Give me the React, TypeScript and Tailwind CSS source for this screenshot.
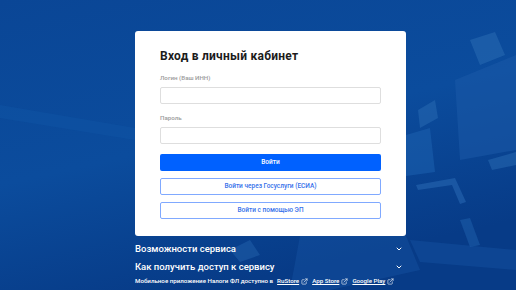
import { ChevronDown, ExternalLink } from "lucide-react";

function Field({ label }: { label: string }) {
  return (
    <div className="flex flex-col">
      <label className="h-[6px] text-[6.2px] font-medium leading-[6px] text-[#9b9b9b]">{label}</label>
      <input className="mt-[6px] h-[17px] rounded-[2px] border border-[#dedede] bg-white outline-none" />
    </div>
  );
}

function Accordion({ title }: { title: string }) {
  return (
    <button className="flex h-[18px] w-full items-center justify-between text-left text-[9.5px] font-medium text-white">
      <span>{title}</span>
      <ChevronDown className="mr-[3px] h-[8px] w-[8px]" strokeWidth={3} />
    </button>
  );
}

function StoreLink({ name }: { name: string }) {
  return (
    <a className="flex items-center gap-[2px] text-white underline">
      {name}
      <ExternalLink className="h-[7px] w-[7px]" strokeWidth={2} />
    </a>
  );
}

function Backdrop() {
  return (
    <svg className="absolute inset-0 h-full w-full" viewBox="0 0 516 290" preserveAspectRatio="none">
      <defs>
        <linearGradient id="bg" x1="0" y1="0" x2="0.4" y2="1">
          <stop offset="0" stopColor="#0a4696" />
          <stop offset="0.55" stopColor="#0b4c9d" />
          <stop offset="1" stopColor="#073b87" />
        </linearGradient>
      </defs>
      <rect width="516" height="290" fill="url(#bg)" />
      <polygon points="0,105 135,128 135,140 0,118" fill="#1158a8" opacity="0.35" />
      <polygon points="470,40 495,32 505,55 480,65" fill="#2a6bb3" opacity="0.55" />
      <polygon points="455,80 516,55 516,150 460,160" fill="#1b5aa8" opacity="0.55" />
      <polygon points="418,110 435,100 438,118 420,128" fill="#2a6bb3" opacity="0.5" />
      <polygon points="406,135 430,128 435,172 406,176" fill="#1a5fae" opacity="0.6" />
      <polygon points="488,160 516,152 516,165 492,170" fill="#2a6bb3" opacity="0.5" />
      <polygon points="416,185 455,178 466,202 460,204 452,185 418,190" fill="#2765b0" opacity="0.6" />
      <polygon points="460,220 470,218 480,245 470,247" fill="#2062ad" opacity="0.5" />
      <polygon points="300,236 406,236 420,270 330,290 290,290" fill="#1a5aa8" opacity="0.35" />
      <polygon points="230,250 250,240 260,255 240,262" fill="#2a6bb3" opacity="0.4" />
      <polygon points="410,240 516,250 516,270 420,262" fill="#1b5aa8" opacity="0.35" />
    </svg>
  );
}

export default function App() {
  return (
    <div className="relative h-[290px] w-[516px] overflow-hidden font-['Roboto',sans-serif]">
      <Backdrop />
      <div className="relative ml-[135px] flex w-[271px] flex-col pt-[31px]">
        <div className="flex flex-col rounded-[3px] bg-white px-[25px] pb-[17px] pt-[18px]">
          <h1 className="text-[12px] font-bold leading-[15px] tracking-[0.25px] text-[#1c1c1c]">Вход в личный кабинет</h1>
          <div className="mt-[11px] flex flex-col gap-[11px]">
            <Field label="Логин (Ваш ИНН)" />
            <Field label="Пароль" />
          </div>
          <div className="mt-[10px] flex flex-col gap-[7px] text-[6.5px] font-medium">
            <button className="h-[17px] rounded-[2px] bg-[#0061ff] text-white">Войти</button>
            <button className="h-[17px] rounded-[2px] border border-[#80a9ff] text-[#3570ea]">Войти через Госуслуги (ЕСИА)</button>
            <button className="h-[17px] rounded-[2px] border border-[#80a9ff] text-[#3570ea]">Войти с помощью ЭП</button>
          </div>
        </div>
        <div className="mt-[4px] flex flex-col">
          <Accordion title="Возможности сервиса" />
          <Accordion title="Как получить доступ к сервису" />
        </div>
        <div className="mt-[1px] flex items-center gap-[4px] text-[6.2px] font-medium text-white">
          <span>Мобильное приложение Налоги ФЛ доступно в</span>
          <StoreLink name="RuStore" />
          <StoreLink name="App Store" />
          <StoreLink name="Google Play" />
        </div>
      </div>
    </div>
  );
}
